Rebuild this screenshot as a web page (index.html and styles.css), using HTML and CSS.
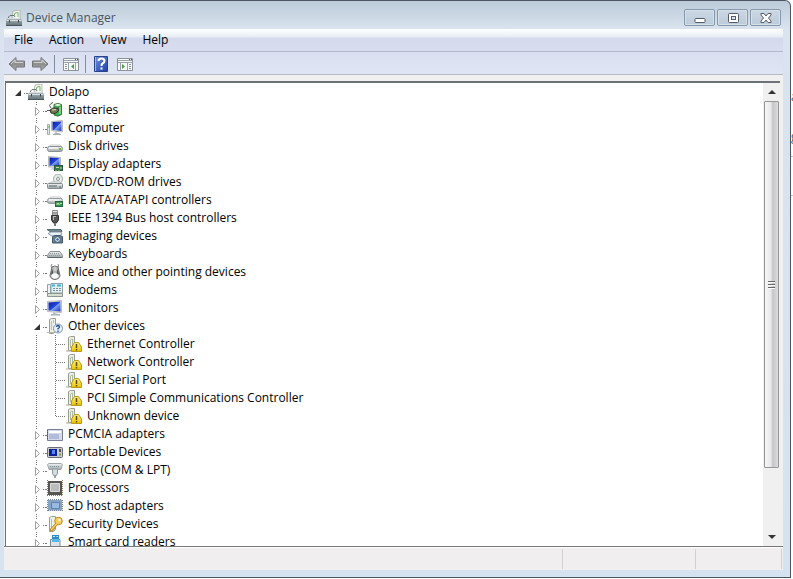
FILE: index.html
```html
<!DOCTYPE html>
<html lang="en">
<head>
<meta charset="utf-8">
<title>Device Manager</title>
<link rel="stylesheet" href="styles.css">
</head>
<body>
<svg class="sprite" aria-hidden="true">
  <defs>
    <linearGradient id="metal" x2="0" y2="1"><stop stop-color="#f4f6f6"/><stop offset="1" stop-color="#9aa3a5"/></linearGradient>
    <linearGradient id="box" x2="0" y2="1"><stop stop-color="#b4bfc3"/><stop offset="1" stop-color="#69767c"/></linearGradient>
    <linearGradient id="screen" x2="1" y2="1"><stop stop-color="#0a1e9c"/><stop offset=".5" stop-color="#2446dc"/><stop offset=".55" stop-color="#7ea0f6"/><stop offset="1" stop-color="#1430b8"/></linearGradient>
    <linearGradient id="grey" x2="0" y2="1"><stop stop-color="#c4c4c4"/><stop offset=".5" stop-color="#8c8c8c"/><stop offset="1" stop-color="#b4b4b4"/></linearGradient>
    <linearGradient id="blue" x2="1" y2="1"><stop stop-color="#7090e0"/><stop offset="1" stop-color="#2040a8"/></linearGradient>
    <linearGradient id="gold" x2="0" y2="1"><stop stop-color="#fff080"/><stop offset="1" stop-color="#e8c000"/></linearGradient>
  </defs>
  <symbol id="closed" viewBox="0 0 19 18"><path d="M8 1.500H9M8 3.500H9M8 17.500H9M15 10.500H16M17 10.500H19" stroke="#777" fill="none"/><path d="M7.500 6.500V14.500L11.500 10.500Z" fill="#fff" stroke="#a0a0a0"/></symbol>
  <symbol id="open" viewBox="0 0 19 18"><path d="M15 10.500H16M17 10.500H19" stroke="#777"/><path d="M12 7V13H6Z" fill="#333"/></symbol>
  <symbol id="guide" viewBox="0 0 19 18"><path d="M8.500 0V18" stroke="#777" stroke-dasharray="1 1"/></symbol>
  <symbol id="branch" viewBox="0 0 19 18"><path d="M8.500 0V18M9 9.500H19" stroke="#777" stroke-dasharray="1 1"/></symbol>
  <symbol id="branch-end" viewBox="0 0 19 18"><path d="M8.500 0V10M9 9.500H19" stroke="#777" stroke-dasharray="1 1"/></symbol>

  <symbol id="root" viewBox="0 0 16 16"><path d="M6 8L7 1L14 0V9Z" fill="#f6f8f0" stroke="#a2aaa5" stroke-width=".8"/><path d="M8 6L9 3L12 2.500V7" fill="none" stroke="#76b06e"/><path d="M2.500 9.500V7L4 5.500H8L9 7" fill="none" stroke="#68757a"/><path d="M0 10L2 8H14L16 10V15H0Z" fill="url(#box)"/><path d="M.500 10.500H15.500M2 8.500H14" stroke="#d9e1e3"/><path d="M0 15.500H16" stroke="#4a565b"/><path d="M3.500 10V12.500M12.500 10V12.500" stroke="#3b474c"/></symbol>
  <symbol id="battery" viewBox="0 0 16 16"><path d="M7 2.500Q11 .500 14.500 2.500V12.500Q11 15.500 7 13Z" fill="#3fae50" stroke="#38753f"/><path d="M7.500 3Q11 1 14 3Q11 5 7.500 3Z" fill="#eaf7e8"/><path d="M13 5V12" stroke="#8de08d" stroke-width="1.500"/><path d="M0 8.500H4M10 8Q13 7 11 5M4 6Q1 3 4 1.500T6 .500" stroke="#555" fill="none"/><path d="M3 8L6 6L11 6.500L11.500 9L8 11.500L4 11Z" fill="#737752" stroke="#33352a"/><path d="M5 8L9 7.500" stroke="#dddfc4"/></symbol>
  <symbol id="computer" viewBox="0 0 16 16"><path d="M.500 4.500H2.500V14.500H.500Z" fill="#e3e9e5" stroke="#a3aeaa"/><path d="M1 7H3" stroke="#57ab51"/><path d="M4.500 1.500L15.500 .500V12L4.500 10.500Z" fill="#e2e4dc" stroke="#bbb"/><path d="M5.500 2L14.500 1.500V11L5.500 10Z" fill="url(#screen)"/><path d="M9 11V13M6 14.500Q10 12 14 14.500Z" stroke="#a2adb0" fill="#d2dada"/></symbol>
  <symbol id="disk" viewBox="0 0 16 16"><path d="M1 9L4 7H13L15 9Z" fill="#f7f7f5" stroke="#ccc"/><rect x=".5" y="8.500" width="15" height="5" rx="2" fill="url(#metal)" stroke="#888f91"/><path d="M2 10H11" stroke="#fff"/><path d="M12 11H14" stroke="#67b73b" stroke-width="2"/></symbol>
  <symbol id="display" viewBox="0 0 16 16"><path d="M1.500 .500L13.500 1.500V11.500L1.500 11Z" fill="#e0e2df" stroke="#b3b9bd"/><path d="M2.500 1.500L12.500 2V10L2.500 10Z" fill="url(#screen)"/><path d="M3 13.500L7 11L9 14Z" fill="#becad0"/><rect x="7.500" y="9.500" width="8" height="5" fill="#377b52" stroke="#275641"/><path d="M9 11.500H12M13 12H15M9 14V16M12 14V16" stroke="#cfdc9b"/></symbol>
  <symbol id="dvd" viewBox="0 0 16 16"><ellipse cx="11" cy="5" rx="4.500" ry="5" fill="#eceeee" stroke="#a2abac"/><path d="M9 1L11 5L14 2" fill="#d5e2d0"/><circle cx="11" cy="5" r="1.500" fill="#fff" stroke="#8c9495"/><path d="M1 10L4 8H13L15 10Z" fill="#f8f8f8" stroke="#bbb"/><rect x=".5" y="9.500" width="15" height="5" rx="1" fill="url(#metal)" stroke="#81888a"/><path d="M2 12H10M12 13H14" stroke="#59666b"/></symbol>
  <symbol id="ide" viewBox="0 0 16 16"><path d="M1 7L4 5H13L15 7Z" fill="#fff" stroke="#c6c6c6"/><rect x=".5" y="6.500" width="15" height="5" rx="2" fill="url(#metal)" stroke="#949c9e"/><path d="M2 8H12" stroke="#fff"/><rect x="8.500" y="9.500" width="7" height="5" fill="#3a9256" stroke="#27693c"/><path d="M10 13V11.500H12V13M13 11.500H15" stroke="#c0e8ae" fill="none"/></symbol>
  <symbol id="firewire" viewBox="0 0 16 16"><path d="M5.500 .500H10.500V5H5.500Z" fill="#e4e4e4" stroke="#888"/><path d="M7 2V4M9 2V4" stroke="#555"/><path d="M4.500 5.500H11.500V10L9.500 13H6.500L4.500 10Z" fill="#555" stroke="#333"/><path d="M6 6.500H9M6.500 7V10" stroke="#bbb" fill="none"/><path d="M8 13V16" stroke="#777" stroke-width="2"/></symbol>
  <symbol id="imaging" viewBox="0 0 16 16"><path d="M0 1.500H14L15 3.500H3Z" fill="#71858e" stroke="#566d77"/><path d="M1 5.500L4 4H14L15 6L12 8H5Z" fill="#e8f1f3" stroke="#8a9ba2"/><path d="M5.500 8.500L8 7.500H13L15.500 8.500V15H5.500Z" fill="#64839a" stroke="#41586c"/><circle cx="10.500" cy="11.500" r="2.800" fill="#eaf5f9" stroke="#40576a"/><circle cx="10.500" cy="11.500" r="1.200" fill="#36589b"/></symbol>
  <symbol id="keyboard" viewBox="0 0 16 16"><path d="M3 5.500H13L15.500 9.500V11.500H.500V9.500Z" fill="url(#metal)" stroke="#889093"/><path d="M3 7.500H13M2 9.500H14" stroke="#8b9397" stroke-dasharray="1 1"/><path d="M1 11.500H15" stroke="#60686b"/></symbol>
  <symbol id="mouse" viewBox="0 0 16 16"><path d="M5 4Q3 2 5 0M11 4Q12 2 11 0" stroke="#888" fill="none"/><path d="M5 3Q8 1 11 3L13 12Q12 15.500 8 15.500T3 12Z" fill="#d8dcdc" stroke="#666"/><path d="M5 4L4 11L6.500 9ZM11 4L12 11L9.500 9Z" fill="#4c5253"/><path d="M7 2.500H9V8H7Z" fill="#fff" stroke="#999"/><ellipse cx="8" cy="12" rx="3" ry="2.500" fill="#f9fafa"/></symbol>
  <symbol id="modem" viewBox="0 0 16 16"><path d="M4 1.500H15.500V11H4Z" fill="#e4f0f3" stroke="#8aa1a9"/><path d="M.500 2.500H3.500V13H.500Z" fill="#eff3f2" stroke="#8fa2a7"/><path d="M5 3.500H8M10 3.500H14" stroke="#36b4d3" stroke-width="2"/><path d="M6 6.500H14M6 8.500H14" stroke="#7b929a" stroke-dasharray="2 1"/><path d="M.500 11.500H15.500V14.500H.500Z" fill="#d7dfcf" stroke="#899893"/></symbol>
  <symbol id="monitor" viewBox="0 0 16 16"><path d="M.500 1.500L14.500 .500V12.500L.500 11.500Z" fill="#e4e4df" stroke="#bbb"/><path d="M1.500 2.500L13.500 1.500V11.500L1.500 10.500Z" fill="url(#screen)"/><path d="M7 12V14M4 15Q8 12.500 13 15Z" fill="#cbd7da" stroke="#a0adb0"/></symbol>
  <symbol id="unknown" viewBox="0 0 16 16"><path d="M2.500 1.500L4.500 .500H8.500V13.500L6.500 15.500H2.500Z" fill="#eceee7" stroke="#9a9e90"/><path d="M4.500 3V12M6.500 2V5" stroke="#b4c6a8"/><path d="M0 14.500H7" stroke="#b8b8ac"/><circle cx="11" cy="10.500" r="4.500" fill="#e8f1fa" stroke="#7895b6"/><path d="M9.500 9Q9.500 7.500 11 7.500T12.500 9Q12.500 10 11 10.500V11.500M11 12.500V14" stroke="#244b97" fill="none" stroke-width="1.300"/></symbol>
  <symbol id="warning" viewBox="0 0 16 16"><path d="M2.500 1.500L4.500 .500H8.500V14.500H2.500Z" fill="#eceee7" stroke="#999d91"/><path d="M4.500 12V4L6.500 3V12" fill="#f5f7f1" stroke="#acbba1"/><path d="M0 15H8" stroke="#a9aa99"/><path d="M5.500 15.500V11L8.500 6.500H12.500L15.500 11V15.500Z" fill="url(#gold)" stroke="#b89a18"/><path d="M10.500 8V12M10.500 13V14.500" stroke="#5b4900" stroke-width="1.500"/></symbol>
  <symbol id="pcmcia" viewBox="0 0 16 16"><path d="M.500 3.500H15.500V14.500H.500Z" fill="#d5dae9" stroke="#788096"/><path d="M2 5H14V7H2Z" fill="#fff"/><path d="M2 8H12V13H2Z" fill="#b1bcda"/><path d="M.500 4V14" stroke="#444d68" stroke-dasharray="1 1"/></symbol>
  <symbol id="portable" viewBox="0 0 16 16"><rect x=".5" y="3.500" width="15" height="10" rx="1" fill="#c8cbc9" stroke="#686e78"/><path d="M2 5H10V12H2Z" fill="#0d2197"/><path d="M5 6H8V10H5Z" fill="#5688ef"/><path d="M12 5H14V8H12Z" fill="#555"/><path d="M12 10.500H14" stroke="#829c4a" stroke-width="2"/></symbol>
  <symbol id="port" viewBox="0 0 16 16"><path d="M.500 2.500L2 1.500H14L15.500 2.500L14 7.500H2Z" fill="url(#metal)" stroke="#a0a8ab"/><path d="M3 4.500H13" stroke="#7b8d94" stroke-dasharray="1 1"/><path d="M5.500 7V11L6.500 13.500H9.500L10.500 11V7Z" fill="#d6ddde" stroke="#8c989c"/><path d="M8 14V16" stroke="#9ba7aa" stroke-width="2"/></symbol>
  <symbol id="processor" viewBox="0 0 16 16"><path d="M.500 0V16M15.500 0V16M0 15.500H16" stroke="#8b7846" stroke-dasharray="1 1"/><path d="M1 1H15V15H1Z" fill="#555552"/><path d="M3.500 3.500H12.500V11.500H3.500Z" fill="#babdbc" stroke="#dcdcda"/></symbol>
  <symbol id="sd" viewBox="0 0 16 16"><path d="M1 2H15V12.500H1Z" fill="#86a3c4"/><path d="M4.500 4.500H12.500V10.500H4.500Z" fill="#98bce1" stroke="#5f81aa"/><path d="M.500 2V13M15.500 2V13M1 1.500H15M1 12.500H15" stroke="#71819a" stroke-dasharray="1 1"/></symbol>
  <symbol id="security" viewBox="0 0 16 16"><path d="M2.500 1.500L4.500 .500H8.500V13.500L6.500 15.500H2.500Z" fill="#edf0e8" stroke="#999f8e"/><path d="M4.500 3V12" stroke="#b5c2a5"/><circle cx="11.500" cy="5" r="3.800" fill="#f7cf57" stroke="#b98933"/><circle cx="12.500" cy="4" r="1.200" fill="#fff"/><path d="M9 7L3.500 13V15H6V13H8V11L11 8.500" fill="#f8ce53" stroke="#b78630"/></symbol>
  <symbol id="smartcard" viewBox="0 0 16 16"><path d="M5 1H12V7H5Z" fill="#328bc8"/><path d="M6 2.500H8M9.500 2.500H11" stroke="#c7edff"/><path d="M3.500 5.500H13V16H3.500Z" fill="#dce2e7" stroke="#7e8c94"/><path d="M5 5H12V8H5Z" fill="#59b7e8"/></symbol>
  <symbol id="arrow" viewBox="0 0 18 16"><path d="M1 8L8 1.500V5H16.500V11H8V14.500Z" fill="url(#grey)" stroke="#747474"/><path d="M3 8L7 4V6.500H15" fill="none" stroke="#d0d0d0"/></symbol>
</svg>

<div class="desktop">
<main class="window">
  <header class="titlebar">
    <svg class="icon"><use href="#root"/></svg>
    <h1>Device Manager</h1>
    <div class="caption">
      <button aria-label="Minimize"><svg viewBox="0 0 12 12"><rect x="1" y="6.500" width="10" height="4" rx="1" fill="#fff" stroke="#535c6c"/></svg></button>
      <button aria-label="Restore"><svg viewBox="0 0 12 12"><rect x="1.500" y="1.500" width="10" height="9" rx="1" fill="#fff" stroke="#535c6c"/><rect x="4.500" y="4.500" width="4" height="3" fill="#dce5ef" stroke="#535c6c"/></svg></button>
      <button aria-label="Close"><svg viewBox="0 0 12 12"><path d="M1 1.500H4L6 4L8 1.500H11V3L8.500 6L11 9V10.500H8L6 8L4 10.500H1V9L3.500 6L1 3Z" fill="#fff" stroke="#535c6c"/></svg></button>
    </div>
  </header>
  <div class="client">
    <nav class="menu" aria-label="Menu"><button>File</button><button>Action</button><button>View</button><button>Help</button></nav>
    <div class="toolbar" role="toolbar" aria-label="Tools">
      <button aria-label="Back"><svg class="arrow"><use href="#arrow"/></svg></button>
      <button aria-label="Forward"><svg class="arrow flip"><use href="#arrow"/></svg></button>
      <i class="rule"></i>
      <button aria-label="Show or hide console tree"><svg class="icon" viewBox="0 0 16 16"><path d="M.500 2.500H15.500V14.500H.500Z" fill="#f7f8f8" stroke="#8c929a"/><path d="M1 4.500H15M1 6.500H15M5.500 7V14M12.500 7V14" stroke="#9aa0a7"/><path d="M2 8.500H4M2 10.500H4M2 12.500H4" stroke="#8d969f"/><path d="M11 8V13L8 10.500Z" fill="#4e9b42"/><path d="M12 3.500H15" stroke="#555" stroke-dasharray="1 1"/></svg></button>
      <i class="rule"></i>
      <button aria-label="Help topics"><svg class="help" viewBox="0 0 14 16"><path d="M.500 .500H13.500V15.500H.500Z" fill="url(#blue)" stroke="#2a4289"/><path d="M1.500 1V15" stroke="#9db3ed"/><path d="M4.500 5Q4.500 2.500 7.500 2.500T10.500 5Q10.500 6.500 8.500 7.500Q7.500 8 7.500 10M7.500 11.500V13.500" fill="none" stroke="#fff" stroke-width="2"/></svg></button>
      <button aria-label="Show or hide action pane"><svg class="icon" viewBox="0 0 16 16"><path d="M.500 2.500H15.500V14.500H.500Z" fill="#f7f8f8" stroke="#8c929a"/><path d="M1 4.500H15M1 6.500H15M3.500 7V14M10.500 7V14" stroke="#9aa0a7"/><path d="M12 8.500H14M12 10.500H14M12 12.500H14" stroke="#8d969f"/><path d="M5 8V13L8 10.500Z" fill="#4e9b42"/><path d="M12 3.500H15" stroke="#555" stroke-dasharray="1 1"/></svg></button>
    </div>
    <section class="pane">
      <ul class="tree" role="tree">
        <li><svg class="cell"><use href="#open"/></svg><svg class="icon"><use href="#root"/></svg><span>Dolapo</span></li>
        <li class="child"><svg class="cell"><use href="#closed"/></svg><svg class="icon"><use href="#battery"/></svg><span>Batteries</span></li>
        <li class="child"><svg class="cell"><use href="#closed"/></svg><svg class="icon"><use href="#computer"/></svg><span>Computer</span></li>
        <li class="child"><svg class="cell"><use href="#closed"/></svg><svg class="icon"><use href="#disk"/></svg><span>Disk drives</span></li>
        <li class="child"><svg class="cell"><use href="#closed"/></svg><svg class="icon"><use href="#display"/></svg><span>Display adapters</span></li>
        <li class="child"><svg class="cell"><use href="#closed"/></svg><svg class="icon"><use href="#dvd"/></svg><span>DVD/CD-ROM drives</span></li>
        <li class="child"><svg class="cell"><use href="#closed"/></svg><svg class="icon"><use href="#ide"/></svg><span>IDE ATA/ATAPI controllers</span></li>
        <li class="child"><svg class="cell"><use href="#closed"/></svg><svg class="icon"><use href="#firewire"/></svg><span>IEEE 1394 Bus host controllers</span></li>
        <li class="child"><svg class="cell"><use href="#closed"/></svg><svg class="icon"><use href="#imaging"/></svg><span>Imaging devices</span></li>
        <li class="child"><svg class="cell"><use href="#closed"/></svg><svg class="icon"><use href="#keyboard"/></svg><span>Keyboards</span></li>
        <li class="child"><svg class="cell"><use href="#closed"/></svg><svg class="icon"><use href="#mouse"/></svg><span>Mice and other pointing devices</span></li>
        <li class="child"><svg class="cell"><use href="#closed"/></svg><svg class="icon"><use href="#modem"/></svg><span>Modems</span></li>
        <li class="child"><svg class="cell"><use href="#closed"/></svg><svg class="icon"><use href="#monitor"/></svg><span>Monitors</span></li>
        <li class="child"><svg class="cell"><use href="#open"/></svg><svg class="icon"><use href="#unknown"/></svg><span>Other devices</span></li>
        <li class="child"><svg class="cell"><use href="#guide"/></svg><svg class="cell"><use href="#branch"/></svg><svg class="icon"><use href="#warning"/></svg><span>Ethernet Controller</span></li>
        <li class="child"><svg class="cell"><use href="#guide"/></svg><svg class="cell"><use href="#branch"/></svg><svg class="icon"><use href="#warning"/></svg><span>Network Controller</span></li>
        <li class="child"><svg class="cell"><use href="#guide"/></svg><svg class="cell"><use href="#branch"/></svg><svg class="icon"><use href="#warning"/></svg><span>PCI Serial Port</span></li>
        <li class="child"><svg class="cell"><use href="#guide"/></svg><svg class="cell"><use href="#branch"/></svg><svg class="icon"><use href="#warning"/></svg><span>PCI Simple Communications Controller</span></li>
        <li class="child"><svg class="cell"><use href="#guide"/></svg><svg class="cell"><use href="#branch-end"/></svg><svg class="icon"><use href="#warning"/></svg><span>Unknown device</span></li>
        <li class="child"><svg class="cell"><use href="#closed"/></svg><svg class="icon"><use href="#pcmcia"/></svg><span>PCMCIA adapters</span></li>
        <li class="child"><svg class="cell"><use href="#closed"/></svg><svg class="icon"><use href="#portable"/></svg><span>Portable Devices</span></li>
        <li class="child"><svg class="cell"><use href="#closed"/></svg><svg class="icon"><use href="#port"/></svg><span>Ports (COM &amp; LPT)</span></li>
        <li class="child"><svg class="cell"><use href="#closed"/></svg><svg class="icon"><use href="#processor"/></svg><span>Processors</span></li>
        <li class="child"><svg class="cell"><use href="#closed"/></svg><svg class="icon"><use href="#sd"/></svg><span>SD host adapters</span></li>
        <li class="child"><svg class="cell"><use href="#closed"/></svg><svg class="icon"><use href="#security"/></svg><span>Security Devices</span></li>
        <li class="child"><svg class="cell"><use href="#closed"/></svg><svg class="icon"><use href="#smartcard"/></svg><span>Smart card readers</span></li>
      </ul>
      <div class="scrollbar">
        <button aria-label="Scroll up"><svg viewBox="0 0 8 4"><path d="M0 4L4 0L8 4Z"/></svg></button>
        <div class="track"><div class="thumb"><i></i><i></i><i></i></div></div>
        <button aria-label="Scroll down"><svg viewBox="0 0 8 4"><path d="M0 0L4 4L8 0Z"/></svg></button>
      </div>
    </section>
    <footer class="status"><div></div><div></div><div></div></footer>
  </div>
</main>
<aside class="behind"><p>a</p><p>g</p><hr><hr></aside>
</div>
</body>
</html>
```
FILE: styles.css
```css
* { box-sizing: border-box; }
body { margin: 0; background: #fff; color: #000; font: 12px/18px "Open Sans", "Noto Sans", sans-serif; }
button { border: 0; padding: 0; background: none; font: inherit; color: inherit; }
svg { display: block; flex: none; }
.sprite { position: absolute; width: 0; height: 0; }
.icon { width: 16px; height: 16px; }
.desktop { display: flex; height: 100vh; padding-bottom: 1px; background: #fff; overflow: hidden; }
.window {
  flex: 1; min-width: 0; display: flex; flex-direction: column; padding: 0 7px 7px 4px;
  border: solid #4c5662; border-width: 1px 1px 1px 0; border-radius: 0 6px 0 0;
  background: linear-gradient(#bccbd9, #d9e4ee 28px, #d5e3f0);
}
.titlebar { flex: none; display: flex; align-items: center; height: 28px; padding: 5px 2px 0; }
.titlebar h1 { margin: 0 0 0 4px; font-size: 12px; font-weight: 400; color: #4a5562; }
.caption { display: flex; gap: 2px; margin-left: auto; }
.caption button { display: grid; place-items: center; width: 31px; height: 17px; border: 1px solid #8799ad; border-radius: 2px; background: linear-gradient(#cbd7e3, #bccbda); box-shadow: inset 0 0 0 1px #d7e1ea; }
.caption svg { width: 12px; height: 12px; }
.client { flex: 1; min-height: 0; display: flex; flex-direction: column; background: #f0f0f0; }
.menu { flex: none; display: flex; gap: 16px; height: 23px; padding: 0 10px; border-bottom: 1px solid #b2b9ca; background: linear-gradient(#fff, #e8ecf5 8px, #d4daeb 9px, #d8deef); }
.toolbar { flex: none; display: flex; align-items: center; height: 23px; padding: 2px 4px 0; border-bottom: 1px solid #b4bac6; background: linear-gradient(#d9dff0, #dfe5f4); }
.arrow { width: 18px; height: 16px; margin-right: 5px; }
.flip { transform: scaleX(-1); }
.rule { width: 1px; height: 18px; margin-right: 8px; background: #8490a2; }
.toolbar .icon { margin-right: 6px; }
.help { width: 14px; height: 16px; margin-right: 9px; }
.pane { flex: 1; min-height: 0; display: flex; margin: 6px 3px 0 1px; border: solid #6d7278; border-width: 2px 0 0 1px; background: #fff; }
.tree { flex: 1; min-width: 0; margin: 0; padding: 0 0 0 3px; list-style: none; overflow: hidden; }
.tree li { display: flex; align-items: center; height: 18px; white-space: nowrap; }
.tree .child { padding-left: 19px; }
.tree span { margin-left: 5px; }
.cell { width: 19px; height: 18px; }
.scrollbar { flex: none; display: flex; flex-direction: column; width: 17px; background: #f0f0f0; }
.scrollbar button { display: grid; place-items: center; height: 18px; }
.scrollbar svg { width: 8px; height: 4px; fill: #333; }
.track { flex: 1; }
.thumb { display: flex; flex-direction: column; align-items: center; justify-content: center; gap: 1px; height: 86%; margin: 0 1px; border: 1px solid #979797; border-radius: 1px; background: linear-gradient(90deg, #f5f5f5, #e9e9eb 45%, #c6c6ca 60%, #dcdcdf); }
.thumb i { width: 7px; height: 2px; background: #666; border-bottom: 1px solid #fff; }
.status { flex: none; display: grid; grid-template-columns: 1fr 133px 86px; height: 24px; padding: 2px 1px 1px 0; border-top: 1px solid #777; background: #f0eeee; box-shadow: inset 0 1px #fff; }
.status div { border-right: 1px solid #d2d0d0; }
.behind { flex: none; width: 2px; overflow: hidden; padding-top: 88px; color: #555; }
.behind p { margin: 0 0 22px; }
.behind p + p { margin: 0 0 10px; }
.behind hr { margin: 0 0 38px; border: 0; border-top: 1px solid #c8c8c8; }
```
